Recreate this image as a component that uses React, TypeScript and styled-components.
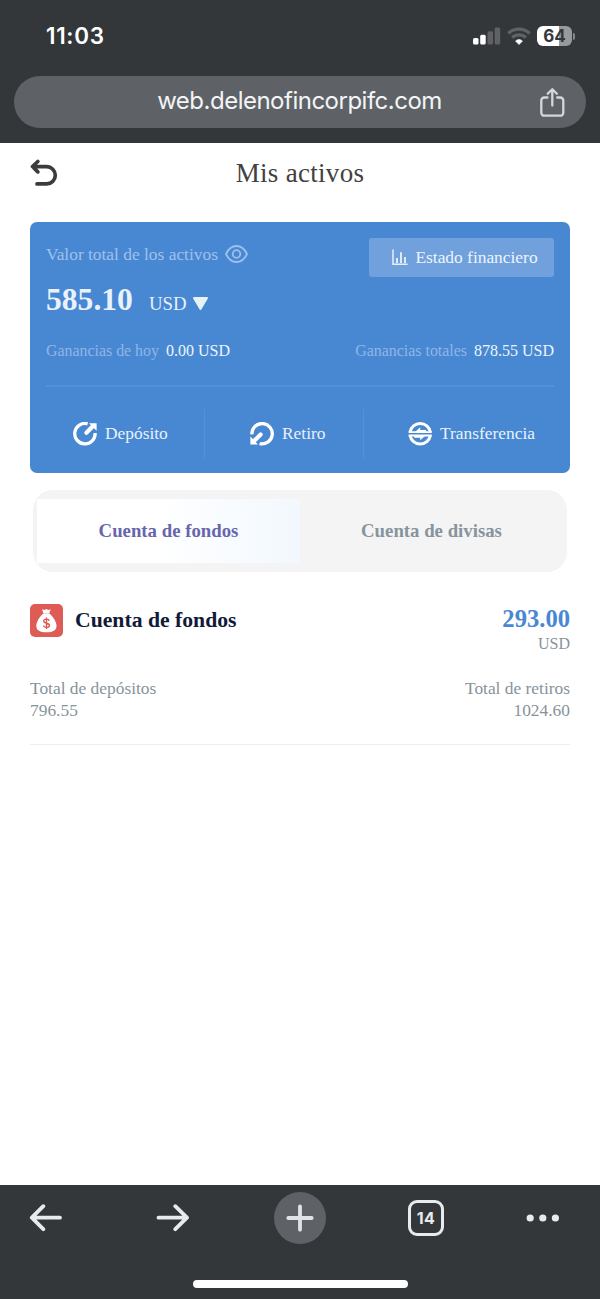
import React from "react";
import styled, { createGlobalStyle } from "styled-components";

const GlobalStyle = createGlobalStyle`
  * { box-sizing: border-box; }
  body { margin: 0; background: #fff; }
  svg { display: block; flex: none; }
`;

const serif = `"Liberation Serif", "Times New Roman", serif`;
const sans = `Inter, "Liberation Sans", sans-serif`;

const Screen = styled.div`
  width: 600px;
  height: 1299px;
  display: flex;
  flex-direction: column;
  font-family: ${serif};
  background: #fff;
  white-space: nowrap;
`;

const BrowserTop = styled.header`
  height: 143px;
  background: #34373a;
  font-family: ${sans};
`;

const StatusBar = styled.div`
  height: 76px;
  padding: 0 25px 4px 46px;
  display: flex;
  align-items: center;
  justify-content: space-between;
`;

const Clock = styled.span`
  color: #fff;
  font-size: 22.4px;
  font-weight: 600;
  line-height: 28px;
  letter-spacing: 0.7px;
`;

const Indicators = styled.div`
  display: flex;
  align-items: center;
`;

const Battery = styled.div`
  width: 35px;
  height: 20px;
  margin-left: 6px;
  border-radius: 6px;
  background: linear-gradient(90deg, #fff 64%, #98999b 64%);
  color: #34373a;
  font-size: 17px;
  font-weight: 700;
  line-height: 20px;
  text-align: center;
`;

const BatteryTip = styled.div`
  width: 2px;
  height: 7px;
  margin-left: 1px;
  border-radius: 0 2px 2px 0;
  background: #85878a;
`;

const AddressBar = styled.div`
  height: 52px;
  margin: 0 14px;
  padding: 0 20px 0 18px;
  border-radius: 26px;
  background: #5e6266;
  display: grid;
  grid-template-columns: 28px 1fr 28px;
  align-items: center;
  color: #f3f4f5;
`;

const Url = styled.span`
  text-align: center;
  font-size: 24px;
  line-height: 30px;
  padding: 0 0 2px 1px;
  letter-spacing: -0.5px;
`;

const Page = styled.main`
  flex: 1;
  padding: 0 30px;
`;

const TitleBar = styled.div`
  height: 79px;
  padding-bottom: 19px;
  display: grid;
  grid-template-columns: 28px 1fr 28px;
  align-items: center;
`;

const Title = styled.h1`
  margin: 0;
  text-align: center;
  color: #414141;
  font-size: 27px;
  font-weight: 400;
  line-height: 30px;
  letter-spacing: 0.3px;
`;

const Card = styled.section`
  height: 251px;
  padding: 0 16px;
  border-radius: 7px;
  background: #4888d3;
  color: #e9f1fa;
`;

const Row = styled.div<{ $h: number }>`
  height: ${(p) => p.$h}px;
  display: flex;
  align-items: center;
  justify-content: space-between;
`;

const EarningsRow = styled(Row)`
  padding-bottom: 14px;
`;

const CardTop = styled.div`
  height: 108px;
  padding-top: 16px;
  display: flex;
  justify-content: space-between;
  align-items: flex-start;
`;

const Label = styled.div`
  display: flex;
  align-items: center;
  gap: 7px;
  height: 32px;
  color: #9fc1ea;
  font-size: 17.4px;
`;

const Balance = styled.div`
  display: flex;
  align-items: baseline;
  height: 40px;
  margin-top: 10px;
  font-size: 31.6px;
  font-weight: 700;
  line-height: 40px;
`;

const Currency = styled.span`
  margin: 0 6px 0 16px;
  font-size: 18.8px;
  font-weight: 400;
`;

const StatementButton = styled.button`
  width: 185px;
  height: 39px;
  border: 0;
  border-radius: 3px;
  padding: 0 0 1px 7px;
  background: #70a1dd;
  color: #edf4fc;
  font-family: inherit;
  font-size: 17.4px;
  display: flex;
  align-items: center;
  justify-content: center;
  gap: 7px;
`;

const Earnings = styled.span`
  color: #8fb6e5;
  font-size: 15.9px;
`;

const EarningsValue = styled.span`
  margin-left: 7px;
  color: #eef5fc;
  font-size: 16px;
`;

const Actions = styled.div`
  height: 87px;
  border-top: 2px solid #528fd7;
  display: grid;
  grid-template-columns: 159px 159px 1fr;
  align-items: center;
  padding-top: 8px;
`;

const Action = styled.div<{ $divider?: boolean; $pad?: number }>`
  height: 50px;
  padding-left: ${(p) => p.$pad ?? 0}px;
  border-right: ${(p) => (p.$divider ? "1px solid #5690d8" : "0")};
  display: flex;
  align-items: center;
  gap: 8px;
  font-size: 17.4px;
`;

const Tabs = styled.div`
  height: 82px;
  margin: 17px 3px 0;
  padding: 9px 4px;
  border-radius: 20px;
  background: #f4f4f4;
  display: grid;
  grid-template-columns: 1fr 1fr;
`;

const Tab = styled.div<{ $active?: boolean }>`
  height: 64px;
  display: flex;
  align-items: center;
  justify-content: center;
  font-size: 18.8px;
  font-weight: 700;
  color: ${(p) => (p.$active ? "#6766ad" : "#87949d")};
  background: ${(p) => (p.$active ? "linear-gradient(90deg, #fff 45%, #f2f8fe)" : "none")};
`;

const Account = styled.section`
  height: 173px;
  padding-top: 32px;
  border-bottom: 1px solid #eeeeef;
  color: #87939b;
`;

const AccountHead = styled.div`
  display: flex;
  justify-content: space-between;
  height: 73px;
`;

const AccountName = styled.h2`
  margin: 0;
  height: 33px;
  display: flex;
  align-items: center;
  gap: 12px;
  color: #121a38;
  font-size: 21.7px;
  font-weight: 700;
`;

const AccountIcon = styled.div`
  width: 33px;
  height: 33px;
  border-radius: 5px;
  background: #de5b56;
`;

const AccountBalance = styled.div`
  text-align: right;
  font-size: 16px;
  line-height: 19px;
`;

const Amount = styled.div`
  color: #4888d3;
  font-size: 24.6px;
  font-weight: 700;
  line-height: 30px;
`;

const Total = styled.div<{ $right?: boolean }>`
  font-size: 17.4px;
  line-height: 22px;
  text-align: ${(p) => (p.$right ? "right" : "left")};
`;

const BrowserBottom = styled.footer`
  height: 114px;
  background: #34373a;
  color: #e8ebee;
  display: flex;
  flex-direction: column;
  align-items: center;
`;

const NavRow = styled.nav`
  width: 100%;
  height: 65px;
  padding: 0 38px 0 29px;
  display: grid;
  grid-template-columns: 127px 118px 134px 118px 1fr;
  align-items: center;
`;

const NewTab = styled.div`
  width: 52px;
  height: 52px;
  border-radius: 50%;
  background: #5e6266;
  display: flex;
  align-items: center;
  justify-content: center;
`;

const TabCount = styled.div`
  width: 36px;
  height: 36px;
  border: 3px solid #e8ebee;
  border-radius: 9px;
  display: flex;
  align-items: center;
  justify-content: center;
  font-family: ${sans};
  font-size: 16px;
  font-weight: 700;
  letter-spacing: 0.3px;
`;

const HomeIndicator = styled.div`
  width: 215px;
  height: 8px;
  margin-top: 30px;
  border-radius: 4px;
  background: #fff;
`;

const SignalIcon = () => (
  <svg width="28" height="18" viewBox="0 0 28 18">
    <rect x="0" y="11" width="5.5" height="6.5" rx="1.5" fill="#fff" />
    <rect x="7.2" y="7.7" width="5.5" height="9.8" rx="1.5" fill="#fff" />
    <rect x="14.5" y="4.2" width="5.5" height="13.3" rx="1.5" fill="#5f6164" />
    <rect x="21.7" y="0.5" width="5.5" height="17" rx="1.5" fill="#5f6164" />
  </svg>
);

const WifiIcon = () => (
  <svg width="24" height="18" viewBox="0 0 24 18" fill="none">
    <path d="M1.4 6.4a15.4 15.4 0 0 1 21.2 0" stroke="#606265" strokeWidth="3.4" />
    <path d="M5.2 10.6a9.8 9.8 0 0 1 13.6 0" stroke="#606265" strokeWidth="3.3" />
    <path d="M8.5 14a5.3 5.3 0 0 1 7 0L12 17.6z" fill="#fff" stroke="#fff" strokeWidth="0.6" strokeLinejoin="round" />
  </svg>
);

const Wifi = styled.div`
  margin-left: 6px;
`;

const ShareIcon = () => (
  <svg width="28" height="32" viewBox="0 0 28 32" fill="none" stroke="#d5d7d9" strokeWidth="2.3" strokeLinecap="round" strokeLinejoin="round">
    <path d="M9.5 11.5H6.3a3 3 0 0 0-3 3v12.2a3 3 0 0 0 3 3h16a3 3 0 0 0 3-3V14.5a3 3 0 0 0-3-3h-3.1M14.3 19.5V3.6M9.7 7.8l4.6-4.6 4.6 4.6" />
  </svg>
);

const BackIcon = () => (
  <svg width="28" height="28" viewBox="0 0 28 28" fill="none" stroke="#3c3c3c" strokeWidth="3.7" strokeLinecap="round" strokeLinejoin="round">
    <path d="M7.8 2.5L2.5 7.5l5.3 5.4M3 7.7h13.7a8.6 8.6 0 0 1 0 17.2H7" />
  </svg>
);

const EyeIcon = () => (
  <svg width="23" height="18" viewBox="0 0 23 18" fill="none" stroke="#9fc1ea" strokeWidth="1.8">
    <path d="M1 9Q4.8 1 11.5 1T22 9Q18.2 17 11.5 17T1 9z" strokeLinejoin="round" />
    <circle cx="11.5" cy="9" r="3.8" />
  </svg>
);

const CaretIcon = () => (
  <svg width="17" height="14" viewBox="0 0 17 14">
    <path d="M2 2h13L8.5 13z" fill="#e5f3f3" stroke="#e5f3f3" strokeWidth="2" strokeLinejoin="round" />
  </svg>
);

const ChartIcon = () => (
  <svg width="16" height="17" viewBox="0 0 16 17" fill="none" stroke="#e5effb">
    <path d="M1 0.5v14.8h14.6" strokeWidth="1.5" />
    <path d="M5 9v5M9 3.2V14M13 8v6" strokeWidth="1.9" />
  </svg>
);

const DepositIcon = () => (
  <svg width="24" height="24" viewBox="0 0.6 24 24" fill="none" stroke="#fff" strokeWidth="3.3">
    <path d="M14.6 2.4A10.2 10.2 0 1 0 22.1 11.6" />
    <path d="M13.4 11.3L20 4.7" strokeWidth="4.2" strokeLinecap="round" />
    <path d="M16 1.8H23.6V9.3z" fill="#fff" stroke="none" />
  </svg>
);

const WithdrawIcon = () => (
  <svg width="24" height="24" viewBox="0 0.6 24 24" fill="none" stroke="#fff" strokeWidth="3.3">
    <path d="M1.9 12.9A10.2 10.2 0 1 1 9.6 22.2" />
    <path d="M10.6 13.1L4 19.7" strokeWidth="4.2" strokeLinecap="round" />
    <path d="M0.4 15.2V23H8z" fill="#fff" stroke="none" />
  </svg>
);

const TransferIcon = () => (
  <svg width="24" height="24" viewBox="-0.2 0.5 24 24" fill="none" stroke="#fff">
    <path d="M1.85 10.6A10.3 10.3 0 0 1 22.15 10.6M22.15 14A10.3 10.3 0 0 1 1.85 14" strokeWidth="3" />
    <path d="M0.4 10.6h23.2M0.4 14h23.2" strokeWidth="1.8" />
    <path d="M6 11.2L12 5.8v2.6h6v2.8zM18 13.4L12 18.8v-2.6H6v-2.8z" fill="#fff" stroke="none" />
  </svg>
);

const MoneyBagIcon = () => (
  <svg width="33" height="33" viewBox="0 0 33 33">
    <path d="M12 5.2l2.4.8 2-1 2 1 2.3-.8-1.6 4.3h-5.6z" fill="#fff" />
    <path d="M13.3 9.5h6.1C23 12.5 26.5 17.7 26.5 22c0 4.6-4 6.3-10.1 6.3S6.3 26.6 6.3 22c0-4.3 3.4-9.5 7-12.5z" fill="#fff" />
    <path d="M19.3 16.8c-.3-1.2-1.4-1.7-2.8-1.7-1.7 0-2.8.8-2.8 2 0 3 5.7 1.4 5.7 4.3 0 1.3-1.2 2-2.9 2-1.6 0-2.8-.6-3-1.9M16.5 13.6v11.3" fill="none" stroke="#de5b56" strokeWidth="1.4" />
  </svg>
);

const ArrowIcon = ({ forward }: { forward?: boolean }) => (
  <svg width="34" height="28" viewBox="0 0 34 28" fill="none" stroke="#e8ebee" strokeWidth="3.8" strokeLinecap="round" strokeLinejoin="round">
    <path d={forward ? "M2.5 13.7h28M19.3 2.2L31 13.7 19.3 25.2" : "M31 13.7H3M14.3 2.2L2.8 13.7l11.5 11.5"} />
  </svg>
);

const PlusIcon = () => (
  <svg width="28" height="28" viewBox="0 0 28 28" stroke="#e0e3e6" strokeWidth="3.8" strokeLinecap="round">
    <path d="M14 2.3v23.4M2.3 14h23.4" />
  </svg>
);

const MoreIcon = () => (
  <svg width="34" height="8" viewBox="0 0 34 8" fill="#e8ebee">
    <circle cx="4.2" cy="4" r="3.6" />
    <circle cx="16.8" cy="4" r="3.6" />
    <circle cx="29.4" cy="4" r="3.6" />
  </svg>
);

export default function App() {
  return (
    <Screen>
      <GlobalStyle />
      <BrowserTop>
        <StatusBar>
          <Clock>11:03</Clock>
          <Indicators>
            <SignalIcon />
            <Wifi>
              <WifiIcon />
            </Wifi>
            <Battery>64</Battery>
            <BatteryTip />
          </Indicators>
        </StatusBar>
        <AddressBar>
          <span />
          <Url>web.delenofincorpifc.com</Url>
          <ShareIcon />
        </AddressBar>
      </BrowserTop>

      <Page>
        <TitleBar>
          <BackIcon />
          <Title>Mis activos</Title>
        </TitleBar>

        <Card>
          <CardTop>
            <div>
              <Label>
                Valor total de los activos <EyeIcon />
              </Label>
              <Balance>
                585.10 <Currency>USD</Currency>
                <CaretIcon />
              </Balance>
            </div>
            <StatementButton>
              <ChartIcon />
              Estado financiero
            </StatementButton>
          </CardTop>
          <EarningsRow $h={55}>
            <Earnings>
              Ganancias de hoy<EarningsValue>0.00 USD</EarningsValue>
            </Earnings>
            <Earnings>
              Ganancias totales<EarningsValue>878.55 USD</EarningsValue>
            </Earnings>
          </EarningsRow>
          <Actions>
            <Action $divider $pad={27}>
              <DepositIcon />
              Depósito
            </Action>
            <Action $divider $pad={45}>
              <WithdrawIcon />
              Retiro
            </Action>
            <Action $pad={44}>
              <TransferIcon />
              Transferencia
            </Action>
          </Actions>
        </Card>

        <Tabs>
          <Tab $active>Cuenta de fondos</Tab>
          <Tab>Cuenta de divisas</Tab>
        </Tabs>

        <Account>
          <AccountHead>
            <AccountName>
              <AccountIcon>
                <MoneyBagIcon />
              </AccountIcon>
              Cuenta de fondos
            </AccountName>
            <AccountBalance>
              <Amount>293.00</Amount>
              USD
            </AccountBalance>
          </AccountHead>
          <Row $h={44}>
            <Total>
              Total de depósitos
              <br />
              796.55
            </Total>
            <Total $right>
              Total de retiros
              <br />
              1024.60
            </Total>
          </Row>
        </Account>
      </Page>

      <BrowserBottom>
        <NavRow>
          <ArrowIcon />
          <ArrowIcon forward />
          <NewTab>
            <PlusIcon />
          </NewTab>
          <TabCount>14</TabCount>
          <MoreIcon />
        </NavRow>
        <HomeIndicator />
      </BrowserBottom>
    </Screen>
  );
}
